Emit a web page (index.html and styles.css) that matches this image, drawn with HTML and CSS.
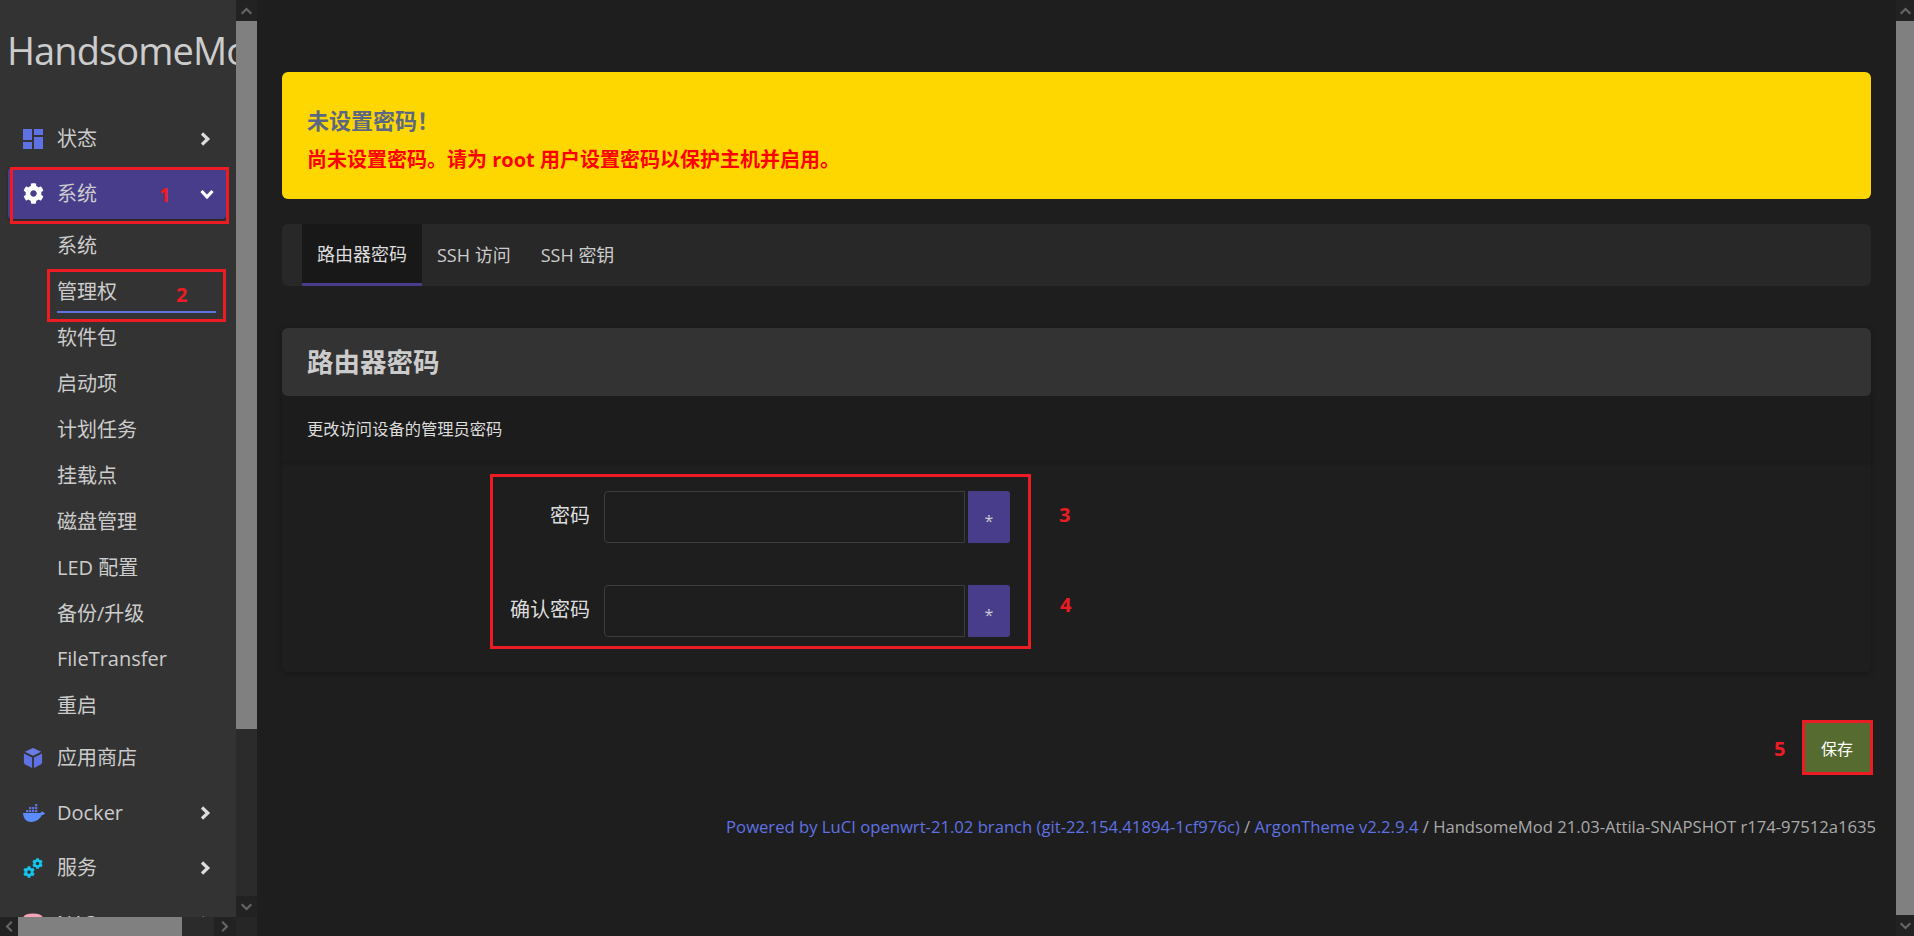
FILE: index.html
```html
<!DOCTYPE html>
<html lang="zh-CN">
<head>
<meta charset="utf-8">
<title>路由器密码</title>
<link rel="stylesheet" href="styles.css">
</head>
<body>
<svg class="defs" width="0" height="0" aria-hidden="true">
  <symbol id="cog" viewBox="0 0 512 512"><path d="M487.4 315.7l-42.6-24.6c4.3-23.2 4.3-47 0-70.2l42.6-24.6c4.9-2.8 7.1-8.6 5.5-14-11.1-35.6-30-67.8-54.7-94.6-3.8-4.1-10-5.1-14.8-2.3L380.8 110c-17.9-15.4-38.5-27.3-60.8-35.1V25.8c0-5.6-3.9-10.5-9.4-11.7-36.7-8.2-74.3-7.8-109.2 0-5.5 1.2-9.4 6.1-9.4 11.7V75c-22.2 7.9-42.8 19.8-60.8 35.1L88.7 85.5c-4.9-2.8-11-1.9-14.8 2.3-24.7 26.7-43.6 58.9-54.7 94.6-1.7 5.4.6 11.2 5.5 14L67.3 221c-4.3 23.2-4.3 47 0 70.2l-42.6 24.6c-4.9 2.8-7.1 8.6-5.5 14 11.1 35.6 30 67.8 54.7 94.6 3.8 4.1 10 5.1 14.8 2.3l42.6-24.6c17.9 15.4 38.5 27.3 60.8 35.1v49.2c0 5.6 3.9 10.5 9.4 11.7 36.7 8.2 74.3 7.8 109.2 0 5.5-1.2 9.4-6.1 9.4-11.7v-49.2c22.2-7.9 42.8-19.8 60.8-35.1l42.6 24.6c4.9 2.8 11 1.9 14.8-2.3 24.7-26.7 43.6-58.9 54.7-94.6 1.5-5.5-.7-11.3-5.6-14.1zM256 336c-44.1 0-80-35.9-80-80s35.9-80 80-80 80 35.9 80 80-35.9 80-80 80z"/></symbol>
  <symbol id="right" viewBox="0 0 12 16"><path d="M3 2.500 8.800 8 3 13.500" fill="none" stroke="currentColor" stroke-width="3.200"/></symbol>
  <symbol id="down" viewBox="0 0 16 12"><path d="M2.500 3 8 8.800 13.500 3" fill="none" stroke="currentColor" stroke-width="3.200"/></symbol>
  <symbol id="sb-up" viewBox="0 0 16 10"><path d="M2 8.500 8 2.500l6 6" fill="none" stroke="currentColor" stroke-width="2.600"/></symbol>
  <symbol id="sb-down" viewBox="0 0 16 10"><path d="M2 1.500 8 7.500l6-6" fill="none" stroke="currentColor" stroke-width="2.600"/></symbol>
  <symbol id="sb-left" viewBox="0 0 10 16"><path d="M8.500 2 2.500 8l6 6" fill="none" stroke="currentColor" stroke-width="2.600"/></symbol>
  <symbol id="sb-right" viewBox="0 0 10 16"><path d="M1.500 2l6 6-6 6" fill="none" stroke="currentColor" stroke-width="2.600"/></symbol>
</svg>
<div class="app">
  <div class="side-wrap">
    <div class="side-col">
      <aside class="sidebar">
        <div class="brand">HandsomeMod</div>
        <nav class="menu">
          <a class="top">
            <svg class="ico" viewBox="0 0 20 20"><path fill="#5e72e4" d="M0 0h9v11H0zM0 13h9v7H0zM11 0h9v6h-9zM11 8h9v12h-9z"/></svg>
            <span class="top-label">状态</span>
            <svg class="chev"><use href="#right"/></svg>
          </a>
          <a class="top active">
            <svg class="ico cog-white"><use href="#cog"/></svg>
            <span class="top-label">系统</span>
            <svg class="chev-down"><use href="#down"/></svg>
          </a>
          <div class="subs">
            <a class="sub">系统</a>
            <a class="sub current">管理权</a>
            <a class="sub">软件包</a>
            <a class="sub">启动项</a>
            <a class="sub">计划任务</a>
            <a class="sub">挂载点</a>
            <a class="sub">磁盘管理</a>
            <a class="sub">LED 配置</a>
            <a class="sub">备份/升级</a>
            <a class="sub">FileTransfer</a>
            <a class="sub">重启</a>
          </div>
          <a class="top">
            <svg class="ico" viewBox="0 0 20 22"><path fill="#6a7ce8" d="M10 0l9 4.200L10 8.600 1 4.200z"/><path fill="#5e72e4" d="M0 6l9 4.400V22l-7.600-3.900Q0 17.400 0 16z"/><path fill="#5e72e4" d="M20 6l-9 4.400V22l7.600-3.900Q20 17.400 20 16z"/></svg>
            <span class="top-label">应用商店</span>
          </a>
          <a class="top">
            <svg class="ico docker" viewBox="0 0 22 18"><path fill="#5b8cff" d="M0 9h17.500c.6-1.300 1.600-1.900 2.300-1.500.4.500.6 1 1 1.200.5 0 .9.100 1.200.3-.6 1.400-1.800 2-3.200 2C17 15 13 18 8 18 3 18 .3 14 0 9z"/><path fill="#5e72e4" d="M3 6h2.300v2.300H3zM6 6h2.300v2.300H6zM9 6h2.300v2.300H9zM12 6h2.300v2.300H12zM6 3h2.300v2.300H6zM9 3h2.300v2.300H9zM12 3h2.300v2.300H12zM12 0h2.300v2.300H12z"/></svg>
            <span class="top-label">Docker</span>
            <svg class="chev"><use href="#right"/></svg>
          </a>
          <a class="top">
            <svg class="ico cogs" viewBox="0 0 20 20"><use href="#cog" x="9" y="0" width="11" height="11"/><use href="#cog" x="0" y="8" width="12" height="12"/></svg>
            <span class="top-label">服务</span>
            <svg class="chev"><use href="#right"/></svg>
          </a>
          <a class="top">
            <svg class="ico" viewBox="0 0 20 20"><ellipse cx="10" cy="4" rx="9.500" ry="3.500" fill="#f5a3b7"/><path fill="#f5a3b7" d="M.5 6v10h19V6z"/></svg>
            <span class="top-label">NAS</span>
            <svg class="chev"><use href="#right"/></svg>
          </a>
        </nav>
      </aside>
      <div class="hbar">
        <span class="hbtn"><svg class="sb-h"><use href="#sb-left"/></svg></span>
        <span class="hthumb"></span>
        <span class="htrack"></span>
        <span class="hbtn hbtn-r"><svg class="sb-h"><use href="#sb-right"/></svg></span>
      </div>
    </div>
    <div class="vbar">
      <span class="vbtn"><svg class="sb-v"><use href="#sb-up"/></svg></span>
      <span class="vthumb"></span>
      <span class="vtrack"></span>
      <span class="vbtn"><svg class="sb-v"><use href="#sb-down"/></svg></span>
      <span class="corner"></span>
    </div>
  </div>

  <main class="main">
    <section class="alert">
      <h4 class="alert-title">未设置密码！</h4>
      <p class="alert-text">尚未设置密码。请为 root 用户设置密码以保护主机并启用。</p>
    </section>
    <ul class="tabs">
      <li class="tab selected">路由器密码</li>
      <li class="tab">SSH 访问</li>
      <li class="tab">SSH 密钥</li>
    </ul>
    <section class="card">
      <h3 class="card-title">路由器密码</h3>
      <div class="card-desc">更改访问设备的管理员密码</div>
      <div class="card-form">
        <div class="field">
          <label class="field-label">密码</label>
          <input class="field-input" type="password">
          <button class="star" type="button">*</button>
        </div>
        <div class="field">
          <label class="field-label">确认密码</label>
          <input class="field-input" type="password">
          <button class="star" type="button">*</button>
        </div>
      </div>
    </section>
    <div class="actions"><button class="save" type="button">保存</button></div>
    <footer class="foot"><a class="link">Powered by LuCI openwrt-21.02 branch (git-22.154.41894-1cf976c)</a> / <a class="link">ArgonTheme v2.2.9.4</a> / HandsomeMod 21.03-Attila-SNAPSHOT r174-97512a1635</footer>
  </main>

  <div class="vbar vbar-main">
    <span class="vbtn"><svg class="sb-v"><use href="#sb-up"/></svg></span>
    <span class="vthumb"></span>
    <span class="vbtn"><svg class="sb-v"><use href="#sb-down"/></svg></span>
  </div>

  <div class="mark box-1"></div>
  <div class="mark box-2"></div>
  <div class="mark box-3"></div>
  <div class="mark box-5"></div>
  <span class="num n1">1</span>
  <span class="num n2">2</span>
  <span class="num n3">3</span>
  <span class="num n4">4</span>
  <span class="num n5">5</span>
</div>
</body>
</html>
```
FILE: styles.css
```css
* { box-sizing: border-box; }
html, body { margin: 0; height: 100%; overflow: hidden; }
body {
  background: #1e1e1e;
  color: #ccc;
  font-family: "Open Sans", "Noto Sans CJK SC", sans-serif;
  font-size: 16px;
}
.defs { position: absolute; }
.app { position: relative; display: flex; width: 1914px; height: 936px; overflow: hidden; }

/* sidebar */
.side-wrap { display: flex; width: 257px; flex: none; }
.side-col { display: flex; flex-direction: column; width: 236px; }
.sidebar { flex: 1; min-height: 0; overflow: hidden; background: #333; }
.brand {
  height: 113px;
  padding: 25px 0 0 7px;
  font-size: 38px;
  letter-spacing: -.9px;
  line-height: 50px;
  white-space: nowrap;
  color: #ccc;
}
.menu { display: flex; flex-direction: column; }
.top {
  display: flex;
  align-items: center;
  flex: none;
  height: 51px;
  margin: 0 10px 4px 8px;
  padding-left: 15px;
  border-radius: 4px;
  font-size: 20px;
  color: #ccc;
}
.active {
  background: #483d8b;
  box-shadow: 0 1px 3px rgba(0, 0, 0, .3);
  margin-bottom: 2px;
}
.ico { width: 20px; height: 20px; flex: none; margin-right: 14px; }
.cog-white { width: 21px; height: 21px; margin: 0 13px 0 0; fill: #fff; }
.cogs { fill: #13c6ee; }
.docker { width: 22px; height: 18px; margin-right: 12px; }
.top-label { flex: 1; line-height: 26px; }
.chev { width: 12px; height: 16px; margin-right: 15px; color: #ddd; flex: none; }
.chev-down { width: 16px; height: 12px; margin-right: 11px; color: #fff; flex: none; }
.subs { display: flex; flex-direction: column; padding-bottom: 5px; }
.sub {
  display: flex;
  align-items: center;
  height: 46px;
  margin: 0 20px 0 57px;
  font-size: 20px;
  color: #ccc;
  white-space: nowrap;
}
.current { border-bottom: 2px solid #5e72e4; padding-top: 2px; }

/* fake scrollbars */
.vbar { display: flex; flex-direction: column; width: 21px; flex: none; background: #262626; }
.vbtn { display: flex; align-items: center; justify-content: center; flex: none; height: 21px; background: #222; color: #666; }
.vthumb { display: block; flex: none; height: 708px; background: #808080; }
.vtrack { flex: 1; background: #2b2b2b; }
.corner { flex: none; height: 19px; background: #262626; }
.sb-v { width: 13px; height: 8px; }
.sb-h { width: 8px; height: 13px; }
.hbar { display: flex; flex: none; height: 19px; background: #2b2b2b; }
.hbtn { display: flex; align-items: center; justify-content: center; width: 18px; flex: none; background: #222; color: #666; }
.hbtn-r { width: 22px; }
.hthumb { width: 164px; flex: none; background: #808080; }
.htrack { flex: 1; }
.vbar-main { width: 18px; }
.vbar-main .vthumb { flex: 1; height: auto; }

/* main */
.main { flex: 1; min-width: 0; padding: 72px 25px 0; }
.alert {
  height: 127px;
  padding: 35px 25px 0;
  background: #ffd700;
  border-radius: 6px;
}
.alert-title { margin: 0; font-size: 22px; line-height: 26px; font-weight: 700; color: #5c6783; }
.alert-text { margin: 15px 0 0; font-size: 20px; line-height: 24px; font-weight: 700; color: #f00; }
.tabs {
  display: flex;
  height: 62px;
  margin: 25px 0 0;
  padding: 0 0 0 20px;
  list-style: none;
  background: #282828;
  border-radius: 6px;
}
.tab { padding: 0 15px; line-height: 62px; font-size: 18px; color: #ccc; }
.tab.selected { padding: 0 15px; width: 120px; white-space: nowrap; background: #181818; border-bottom: 3px solid #483d8b; color: #ddd; line-height: 61px; }
.card {
  height: 344px;
  margin-top: 42px;
  border-radius: 6px;
  box-shadow: 0 2px 6px rgba(0, 0, 0, .25);
}
.card-title {
  margin: 0;
  height: 68px;
  padding: 0 25px;
  background: #333;
  border-radius: 6px;
  font-size: 26.500px;
  line-height: 68px;
  font-weight: 700;
  color: #ccc;
}
.card-desc {
  height: 66px;
  padding: 0 25px;
  line-height: 66px;
  font-size: 16.300px;
  color: #ddd;
  background: #1c1c1c;
  box-shadow: 0 2px 2px rgba(0, 0, 0, .15);
}
.card-form { display: flex; flex-direction: column; gap: 42px; padding-top: 29px; }
.field { display: flex; align-items: stretch; height: 52px; }
.field-label {
  width: 308px;
  flex: none;
  text-align: right;
  font-size: 20px;
  line-height: 50px;
  color: #ddd;
}
.field-input {
  width: 361px;
  flex: none;
  margin: 0 3px 0 14px;
  background: #1e1e1e;
  border: 1px solid #3c3c3c;
  border-radius: 4px 0 0 4px;
  outline: 0;
}
.star {
  width: 42px;
  flex: none;
  padding: 8px 0 0;
  background: #483d8b;
  border: 0;
  border-radius: 0 3px 3px 0;
  font-family: "Open Sans", sans-serif;
  font-size: 16px;
  color: #ccc;
}
.actions { display: flex; justify-content: flex-end; margin-top: 50px; }
.save {
  width: 68px;
  height: 52px;
  background: #556b2f;
  border: 0;
  border-radius: 2px;
  font-family: "Noto Sans CJK SC", sans-serif;
  font-size: 16px;
  color: #fff;
}
.foot {
  margin: 41px -5px 0 -40px;
  text-align: right;
  font-size: 16.650px;
  line-height: 24px;
  color: #aaa;
  white-space: nowrap;
}
.link { color: #5e72e4; }

/* red annotations */
.mark { position: absolute; border: 3px solid #ed1c24; }
.box-1 { left: 10px; top: 167px; width: 219px; height: 57px; }
.box-2 { left: 47px; top: 269px; width: 179px; height: 53px; }
.box-3 { left: 490px; top: 474px; width: 541px; height: 175px; }
.box-5 { left: 1802px; top: 720px; width: 71px; height: 55px; }
.num { position: absolute; font-family: "Open Sans", sans-serif; font-size: 20px; line-height: 24px; font-weight: 700; color: #ed1c24; }
.n1 { left: 159px; top: 183px; }
.n2 { left: 176px; top: 283px; }
.n3 { left: 1059px; top: 503px; }
.n4 { left: 1060px; top: 593px; }
.n5 { left: 1774px; top: 737px; }
```
